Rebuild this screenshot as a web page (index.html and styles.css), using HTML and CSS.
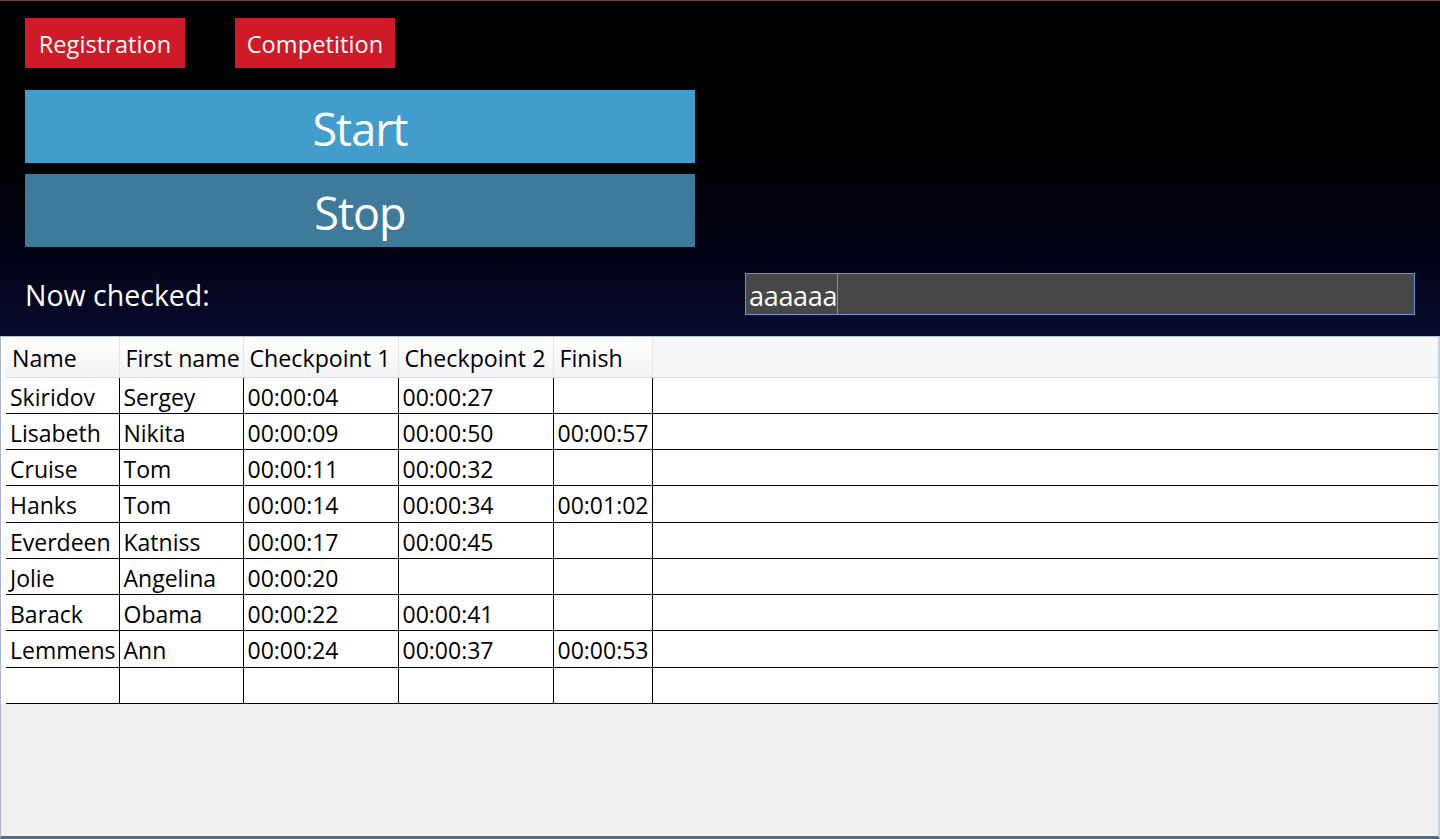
FILE: index.html
```html
<!DOCTYPE html>
<html>
<head>
<meta charset="utf-8">
<title>Competition</title>
<link rel="stylesheet" href="styles.css">
</head>
<body>
<div class="window">
  <header class="top">
    <nav class="nav">
      <button class="nav-btn">Registration</button>
      <button class="nav-btn">Competition</button>
    </nav>
    <button class="big-btn start">Start</button>
    <button class="big-btn stop">Stop</button>
    <div class="checked-row">
      <span class="checked-label">Now checked:</span>
      <div class="checked-input"><span class="checked-text">aaaaaa</span><span class="caret"></span></div>
    </div>
  </header>
  <section class="grid-panel">
    <table class="grid">
      <colgroup>
        <col class="c-name"><col class="c-first"><col class="c-cp"><col class="c-cp"><col class="c-fin"><col>
      </colgroup>
      <thead>
        <tr><th>Name</th><th>First name</th><th>Checkpoint 1</th><th>Checkpoint 2</th><th>Finish</th><th class="filler"></th></tr>
      </thead>
      <tbody>
        <tr><td>Skiridov</td><td>Sergey</td><td>00:00:04</td><td>00:00:27</td><td></td><td class="filler"></td></tr>
        <tr><td>Lisabeth</td><td>Nikita</td><td>00:00:09</td><td>00:00:50</td><td>00:00:57</td><td class="filler"></td></tr>
        <tr><td>Cruise</td><td>Tom</td><td>00:00:11</td><td>00:00:32</td><td></td><td class="filler"></td></tr>
        <tr><td>Hanks</td><td>Tom</td><td>00:00:14</td><td>00:00:34</td><td>00:01:02</td><td class="filler"></td></tr>
        <tr><td>Everdeen</td><td>Katniss</td><td>00:00:17</td><td>00:00:45</td><td></td><td class="filler"></td></tr>
        <tr><td>Jolie</td><td>Angelina</td><td>00:00:20</td><td></td><td></td><td class="filler"></td></tr>
        <tr><td>Barack</td><td>Obama</td><td>00:00:22</td><td>00:00:41</td><td></td><td class="filler"></td></tr>
        <tr><td>Lemmens</td><td>Ann</td><td>00:00:24</td><td>00:00:37</td><td>00:00:53</td><td class="filler"></td></tr>
        <tr><td></td><td></td><td></td><td></td><td></td><td class="filler"></td></tr>
      </tbody>
    </table>
  </section>
</div>
</body>
</html>
```
FILE: styles.css
```css
* { box-sizing: border-box; }
html, body { margin: 0; padding: 0; }
body {
  width: 1440px;
  height: 839px;
  overflow: hidden;
  font-family: "Open Sans", "Noto Sans", sans-serif;
  background: #f0f0f0;
}
.window {
  display: flex;
  flex-direction: column;
  height: 839px;
}
.top {
  height: 336px;
  border-top: 1px solid #6a4446;
  background: linear-gradient(to bottom, #000000 0px, #000000 150px, #020417 260px, #060b2c 335px);
  padding: 17px 25px 0 25px;
  display: flex;
  flex-direction: column;
}
.nav {
  display: flex;
  gap: 50px;
}
.nav-btn {
  width: 160px;
  height: 50px;
  border: 0;
  margin: 0;
  padding: 2px 0 0 0;
  background: #d11a28;
  color: #ffffff;
  font-family: inherit;
  font-size: 23.5px;
  letter-spacing: 0.1px;
}
.big-btn {
  width: 670px;
  height: 73px;
  border: 0;
  margin: 0;
  padding: 4px 0 0 0;
  color: #ffffff;
  font-family: inherit;
  font-size: 45px;
  letter-spacing: -1px;
}
.start { margin-top: 22px; background: #429dcd; }
.stop { margin-top: 11px; background: #3e7a99; }
.checked-row {
  margin-top: 26px;
  display: flex;
  align-items: center;
}
.checked-label {
  width: 720px;
  color: #ffffff;
  font-size: 28.5px;
  padding-left: 0;
  padding-top: 2px;
}
.checked-input {
  width: 670px;
  height: 42px;
  background: #474747;
  border: 1px solid #6e94d2;
  display: flex;
  align-items: center;
  padding-left: 3px;
  padding-top: 3px;
}
.checked-text {
  color: #ffffff;
  font-size: 27px;
  letter-spacing: -0.3px;
  line-height: 1;
}
.caret {
  width: 1px;
  height: 40px;
  margin-top: -3px;
  background: #8c8c8c;
}
.grid-panel {
  flex: 1;
  background: #f0f0f0;
  border-left: 1px solid #a9b6ca;
  border-right: 2px solid #c3d3e6;
  border-bottom: 3px solid #566a82;
  border-top: 1px solid #b5c3d6;
  padding-left: 5px;
  position: relative;
}
.grid-panel::before {
  content: "";
  position: absolute;
  left: 0;
  top: 0;
  width: 100%;
  height: 366px;
  background: #ffffff;
}
.grid {
  position: relative;
  width: 100%;
  border-collapse: collapse;
  table-layout: fixed;
  font-size: 23px;
  color: #000000;
}
.c-name { width: 113px; }
.c-first { width: 124px; }
.c-cp { width: 155px; }
.c-fin { width: 99px; }
.grid th {
  height: 40px;
  padding: 2px 0 0 6px;
  text-align: left;
  font-weight: normal;
  white-space: nowrap;
  font-size: 23.2px;
  background: linear-gradient(to bottom, #ffffff, #f2f3f5);
  border-right: 1px solid #e3e5e8;
  border-bottom: 1px solid #dadde2;
  letter-spacing: 0;
}
.grid th.filler {
  background: #f7f8f9;
  border-right: 0;
}
.grid td {
  height: 36.25px;
  padding: 3px 0 0 4px;
  white-space: nowrap;
  border-right: 1px solid #000000;
  border-bottom: 1px solid #000000;
  background: #ffffff;
  letter-spacing: 0;
}
.grid td.filler { border-right: 0; }
```
